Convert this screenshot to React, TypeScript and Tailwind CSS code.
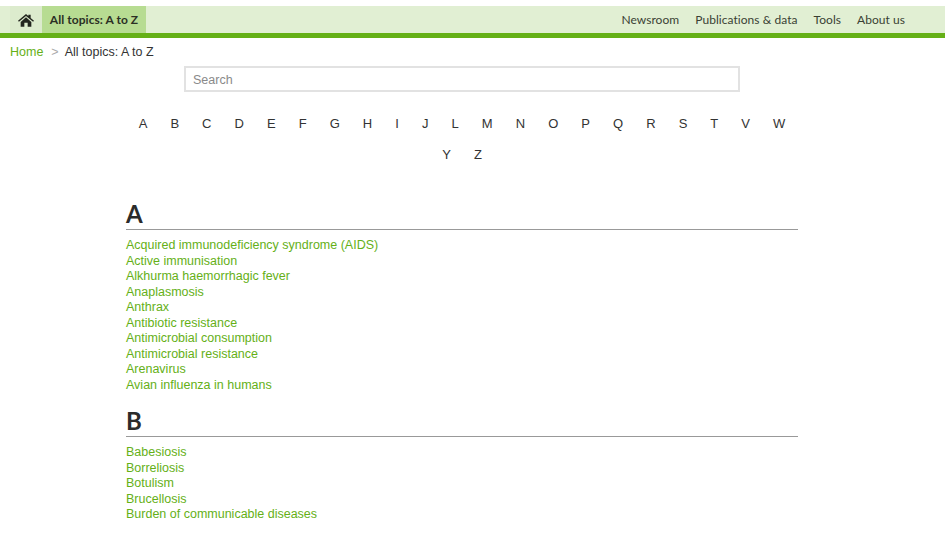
const A = ["Acquired immunodeficiency syndrome (AIDS)","Active immunisation","Alkhurma haemorrhagic fever","Anaplasmosis","Anthrax","Antibiotic resistance","Antimicrobial consumption","Antimicrobial resistance","Arenavirus","Avian influenza in humans"];
const B = ["Babesiosis","Borreliosis","Botulism","Brucellosis","Burden of communicable diseases"];
const letters = "ABCDEFGHIJLMNOPQRSTVWYZ".split("");

function Section({ letter, items }: { letter: string; items: string[] }) {
  return (
    <section className="mb-[14px]">
      <h2 className="h-[30px] border-b border-[#999] font-['Lato',sans-serif] text-[24px] font-bold leading-[28px] text-[#2b2b2b]">{letter}</h2>
      <ul className="mt-[8px]">
        {items.map((t) => (
          <li key={t} className="text-[12.5px] leading-[15.5px] text-[#65b017]">{t}</li>
        ))}
      </ul>
    </section>
  );
}

export default function App() {
  return (
    <div className="h-[536px] w-[945px] overflow-hidden bg-white pt-[6px] font-['Liberation_Sans',sans-serif]">
      <nav className="flex h-[32px] items-stretch justify-between border-b-[5px] border-[#65b017] bg-[#e1efd3] pl-[10px] pr-[40px] font-['Lato',sans-serif] text-[12px] leading-[27px] tracking-[0.05px] text-[#3a3f33]">
        <div className="flex">
          <div className="flex w-[32px] items-center justify-center bg-[#dcebcd]">
            <svg viewBox="0 0 24 20" className="h-[14px] w-[16px] fill-[#23261f]"><path d="M12 1 L15.5 4 V2 H19 V7 L24 11 L22.6 12.6 L12 4 L1.4 12.6 L0 11 Z M4 13 L12 6 L20 13 V20 H14.5 V14 H9.5 V20 H4 Z"/></svg>
          </div>
          <div className="w-[104px] bg-[#b7dc92] text-center font-bold text-[#2b3024]">All topics: A to Z</div>
        </div>
        <div className="flex gap-[16px]">
          <span>Newsroom</span><span>Publications &amp; data</span><span>Tools</span><span>About us</span>
        </div>
      </nav>
      <div className="flex h-[28px] items-center pl-[10px] text-[12.5px] text-[#333]">
        <span className="text-[#65b017]">Home</span>
        <span className="ml-[8px] mr-[6px] text-[#aaa]">&gt;</span>
        <span>All topics: A to Z</span>
      </div>
      <div className="w-[924px]">
        <div className="flex justify-center">
          <input placeholder="Search" className="h-[26px] w-[556px] border-2 border-[#e2e2e2] bg-white pl-[7px] pt-[1px] text-[12.5px] outline-none placeholder:text-[#8a8a8a]" />
        </div>
        <div className="mx-auto mt-[16px] flex w-[672px] flex-wrap justify-center gap-x-[23.05px] text-[13px] leading-[31px] text-[#333]">
          {letters.map((l) => <span key={l}>{l}</span>)}
        </div>
        <div className="mx-auto mt-[30px] w-[672px]">
          <Section letter="A" items={A} />
          <Section letter="B" items={B} />
        </div>
      </div>
    </div>
  );
}
